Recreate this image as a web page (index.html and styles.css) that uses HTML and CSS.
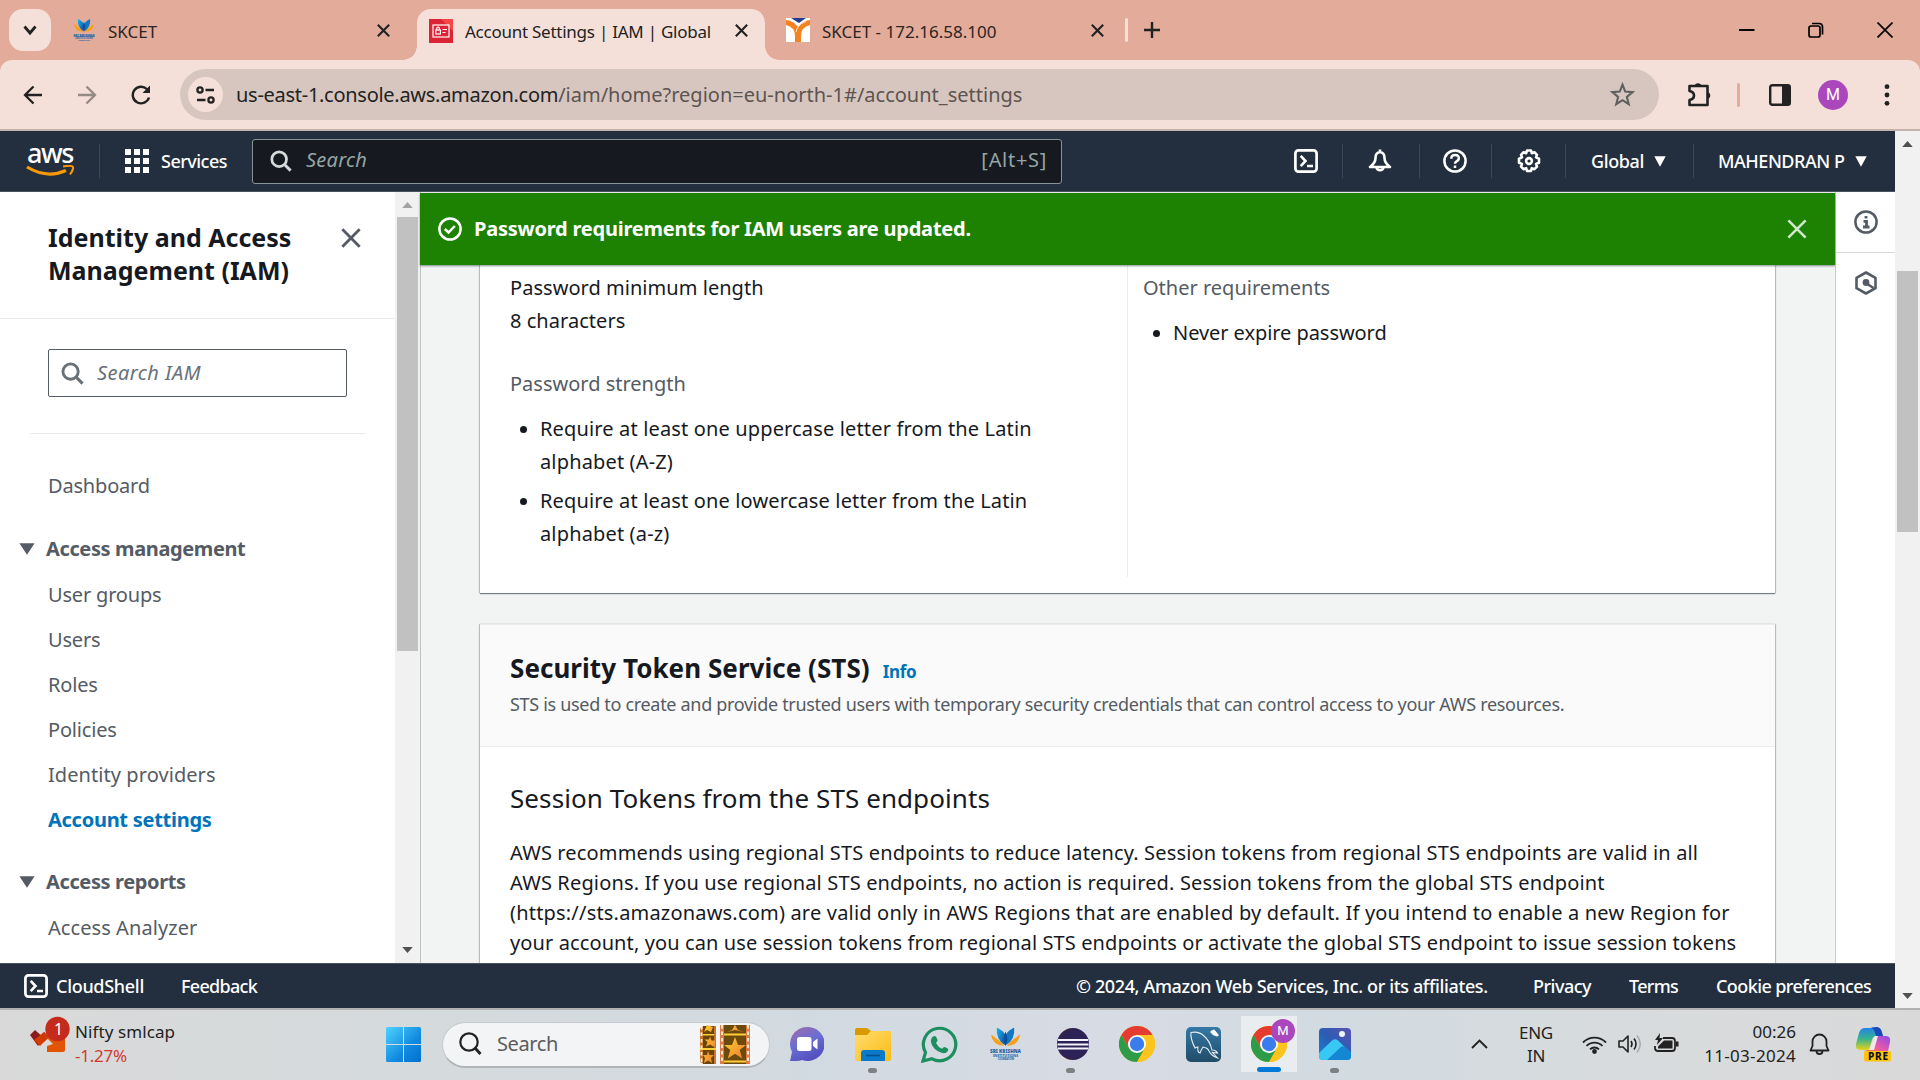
FILE: index.html
```html
<!DOCTYPE html>
<html lang="en">
<head>
<meta charset="utf-8">
<title>Account Settings | IAM | Global</title>
<link rel="stylesheet" href="styles.css">
</head>
<body>
<svg width="0" height="0" class="defs">
  <defs>
    <linearGradient id="gold" x1="0" y1="0" x2="1" y2="1"><stop offset="0" stop-color="#fbd02e"/><stop offset="1" stop-color="#ef7d33"/></linearGradient>
    <linearGradient id="win" x1="0" y1="0" x2="1" y2="1"><stop offset="0" stop-color="#4fd3ff"/><stop offset=".6" stop-color="#128ae0"/><stop offset="1" stop-color="#0070d0"/></linearGradient>
    <linearGradient id="lotusBlue" x1="0" y1="0" x2="1" y2="1"><stop offset="0" stop-color="#18b4f0"/><stop offset="1" stop-color="#0b4fa0"/></linearGradient>
    <symbol id="x" viewBox="0 0 24 24"><path d="M4 4l16 16M20 4L4 20" fill="none" stroke="currentColor" stroke-width="var(--sw,3)"/></symbol>
    <symbol id="lens" viewBox="0 0 24 24"><circle cx="10" cy="10" r="8" fill="none" stroke="currentColor" stroke-width="3"/><path d="M15.8 15.8l6.7 6.7" stroke="currentColor" stroke-width="3.2"/></symbol>
    <symbol id="shell" viewBox="0 0 24 24"><rect x="1.4" y="1.4" width="21.2" height="21.2" rx="3" fill="none" stroke="currentColor" stroke-width="2.7"/><path d="M6.7 6.8l4.8 5.2-4.8 5.2M13 17h6" fill="none" stroke="currentColor" stroke-width="2.6"/></symbol>
    <symbol id="caret" viewBox="0 0 12 10" preserveAspectRatio="none"><path d="M.3.2h11.400L6 9.800z" fill="currentColor"/></symbol>
    <symbol id="lotus" viewBox="0 0 32 34">
      <path d="M14.500 19Q2.500 18.500 1 7q3 2.500 6 4.500 5 3 7.500 7.500zM17.500 19Q29.500 18.500 31 7q-3 2.500-6 4.500-5 3-7.500 7.500z" fill="#f9a01b"/>
      <path d="M15 18Q6 12 7 0q3 1.500 5 3 4 3 4 7z" fill="url(#lotusBlue)"/>
      <path d="M17 18q9-6 8-18-3 1.500-5 3-4 3-4 7z" fill="#1278c4"/>
      <path d="M16 19Q12 12 16 4q4 8 0 15z" fill="#0d4f9e"/>
      <text x="0" y="26" textLength="32" lengthAdjust="spacingAndGlyphs" class="lt">SRI KRISHNA</text>
      <text x="3" y="30" textLength="26" lengthAdjust="spacingAndGlyphs" class="ls">INSTITUTIONS</text>
      <text x="8" y="33" textLength="17" lengthAdjust="spacingAndGlyphs" class="lx">COIMBATORE</text>
    </symbol>
    <symbol id="chrome" viewBox="0 0 36 36">
      <circle cx="18" cy="18" r="18" fill="#fbbc05"/>
      <path d="M2.4 9A18 18 0 0 1 33.6 9H18l-7.8 13.5z" fill="#e53b30"/>
      <path d="M2.4 9A18 18 0 0 0 18 36l7.8-13.5h-15.6z" fill="#2d9c48"/>
      <path d="M18 36A18 18 0 0 0 33.6 9H18l7.8 13.5z" fill="#fcc41c"/>
      <circle cx="18" cy="18" r="9" fill="#fff"/><circle cx="18" cy="18" r="7.2" fill="#3a7cee"/>
    </symbol>
  </defs>
</svg>

<header class="tabs">
  <button class="tab-menu"><svg width="14" height="12" viewBox="0 0 14 12"><path d="M1.5 2.5L7 9l5.500-6.500" fill="none" stroke="#222" stroke-width="2.800"/></svg></button>
  <div class="tab first"><svg class="fav" viewBox="0 0 32 34"><use href="#lotus"/></svg><span class="t">SKCET</span><svg class="close"><use href="#x"/></svg></div>
  <div class="tab active">
    <svg class="fav" viewBox="0 0 24 24"><rect width="24" height="24" fill="#dd2436"/><path d="M12 0h12v12z" fill="#f54749"/><g fill="none" stroke="#fff" stroke-width="1.200"><rect x="4" y="6" width="16" height="12"/><rect x="6.800" y="11" width="4.600" height="4"/><path d="M7.800 11V9q1.300-2 2.600 0v2M13.500 10.500h4.500M13.500 13.500h3"/></g></svg>
    <span class="t act">Account Settings | IAM | Global</span><svg class="close"><use href="#x"/></svg>
  </div>
  <div class="tab third">
    <svg class="fav" viewBox="0 0 24 24"><rect width="24" height="24" fill="#fff"/><path d="M5 0h15l-7 5z" fill="#253c91"/><path d="M0 2Q8 3 12 9q4-6 12-7v5q-9 2-9 11v6H9v-6Q9 9 0 7z" fill="#f58220"/><path d="M12 9q-1.500 2-2 5M12 9q3-4 8-5.500" fill="none" stroke="#fff" stroke-width=".8"/></svg>
    <span class="t">SKCET - 172.16.58.100</span><svg class="close"><use href="#x"/></svg>
  </div>
  <i class="tab-sep"></i>
  <svg class="plus" viewBox="0 0 16 16"><path d="M8 0v16M0 8h16" stroke="#222" stroke-width="2.400"/></svg>
  <div class="win">
    <svg width="16" height="16" viewBox="0 0 16 16"><path d="M0 8h15.500" stroke="#000" stroke-width="2"/></svg>
    <svg width="16" height="16" viewBox="0 0 16 16" fill="none" stroke="#000" stroke-width="1.700"><rect x="1" y="4" width="11" height="11" rx="2"/><path d="M4 1.500h7q3.500 0 3.500 3.500v7.500"/></svg>
    <svg width="16" height="16" viewBox="0 0 16 16"><path d="M.5.5l15 15M15.500.5l-15 15" stroke="#000" stroke-width="1.700"/></svg>
  </div>
</header>

<div class="toolbar-bg">
<div class="toolbar">
  <svg class="nav-i" viewBox="0 0 20 20" fill="none" stroke="#222" stroke-width="2.300"><path d="M19 10H3M10.500 1.500L2 10l8.500 8.500"/></svg>
  <svg class="nav-i dim" viewBox="0 0 20 20" fill="none" stroke="#222" stroke-width="2.300"><path d="M1 10h16M9.500 1.500L18 10l-8.500 8.500"/></svg>
  <svg class="nav-i" viewBox="0 0 20 20" fill="none" stroke="#222" stroke-width="2.400"><path d="M18 12.500A8.300 8.300 0 1 1 15.800 4L18 6.300"/><path d="M19 .5V8h-7.500z" fill="#222" stroke="none"/></svg>
  <div class="omni">
    <span class="site"><svg width="20" height="18" viewBox="0 0 20 18" fill="none" stroke="#222" stroke-width="2.300"><circle cx="4" cy="4" r="2.600"/><path d="M9.500 4H18M1 14h8.500"/><circle cx="15" cy="14" r="2.600"/></svg></span>
    <span class="url"><b>us-east-1.console.aws.amazon.com</b><span>/iam/home?region=eu-north-1#/account_settings</span></span>
    <svg class="star" viewBox="0 0 24 24"><path d="M12 2.500l2.600 6.700 7.100.5-5.500 4.600 1.800 7L12 17.500l-6 3.800 1.800-7L2.300 9.700l7.100-.5z" fill="none" stroke="#5f5f5f" stroke-width="2"/></svg>
  </div>
  <svg class="puzzle" viewBox="0 0 25 26"><path d="M2.500 5h18v19h-18v-5q4.500-1 4.500-4.500T2.500 10z" fill="none" stroke="#222" stroke-width="2.600" stroke-linejoin="round"/><path d="M7.500 5a3.600 3.600 0 0 1 7 0zM20.500 11a3.600 3.600 0 0 1 0 7z" fill="#222"/></svg>
  <i class="tb-sep"></i>
  <svg class="panel" viewBox="0 0 22 22"><rect x="1.200" y="1.200" width="19.600" height="19.600" rx="2" fill="none" stroke="#222" stroke-width="2.400"/><path d="M13 1h8v20h-8z" fill="#222"/></svg>
  <span class="avatar">M</span>
  <svg class="dots" viewBox="0 0 6 22"><circle cx="3" cy="2.700" r="2.400"/><circle cx="3" cy="11" r="2.400"/><circle cx="3" cy="19.300" r="2.400"/></svg>
</div>
</div>

<div class="page">
<div class="console">
  <nav class="aws">
    <div class="logo"><span>aws</span><svg width="50" height="13" viewBox="0 0 50 13"><path d="M1 2q20 12 39 3.500" fill="none" stroke="#f90" stroke-width="3.200"/><path d="M37 1.500q9-1.500 10 .5.500 3-3 7.500" fill="none" stroke="#f90" stroke-width="2"/></svg></div>
    <i class="sep s0"></i>
    <svg class="grid9" viewBox="0 0 24 24" fill="#fff"><path d="M0 0h6v6H0zM9 0h6v6H9zM18 0h6v6h-6zM0 9h6v6H0zM9 9h6v6H9zM18 9h6v6h-6zM0 18h6v6H0zM9 18h6v6H9zM18 18h6v6h-6z"/></svg>
    <span class="services">Services</span>
    <div class="aws-search"><svg><use href="#lens"/></svg><em>Search</em><span>[Alt+S]</span></div>
    <div class="aws-right">
      <span class="cell c1"><svg class="ic"><use href="#shell"/></svg></span>
      <span class="cell c2"><svg class="ic" viewBox="0 0 24 24" fill="none" stroke="#fff" stroke-width="2.600" stroke-linejoin="round"><path d="M12 .5v3M12 3q-4.500.5-4.500 6 0 5-5.500 9h20q-5.500-4-5.500-9 0-5.500-4.500-6zM8.500 18.500a3.600 3.600 0 0 0 7 0"/></svg></span>
      <span class="cell c3"><svg class="ic" viewBox="0 0 24 24" fill="none" stroke="#fff" stroke-width="2.500"><circle cx="12" cy="12" r="10.600"/><path d="M8.300 9.700q0-3.700 3.800-3.700t3.700 3.300q0 2-2.300 3-1.500.8-1.500 2.500M12 16.500v2.600"/></svg></span>
      <span class="cell c4"><svg class="ic" viewBox="0 0 24 24" fill="none" stroke="#fff" stroke-width="2.600" stroke-linejoin="round"><path d="M10 1.500h4l.8 2.700 2.600-1 2.600 2.600-1 2.600 3 1.300v4l-3 1.200 1 2.700-2.600 2.600-2.600-1-.8 2.800h-4l-.8-2.800-2.600 1L4 17.600l1-2.700-3-1.200v-4l3-1.300-1-2.600 2.600-2.600 2.600 1z"/><circle cx="12" cy="12" r="2.900"/></svg></span>
      <span class="cell c5"><span class="glob">Global</span><svg class="car"><use href="#caret"/></svg></span>
      <span class="cell c6"><span class="mah">MAHENDRAN P</span><svg class="car"><use href="#caret"/></svg></span>
    </div>
  </nav>

  <div class="mid">
    <aside class="side">
      <div class="side-head"><h2><span>Identity and Access</span><br>Management (IAM)</h2><svg><use href="#x"/></svg></div>
      <div class="side-search"><svg><use href="#lens"/></svg><em>Search IAM</em></div>
      <ul>
        <li class="dash">Dashboard</li>
        <li class="grp"><svg><use href="#caret"/></svg>Access management</li>
        <li>User groups</li><li>Users</li><li>Roles</li><li>Policies</li><li class="idp">Identity providers</li>
        <li class="cur">Account settings</li>
        <li class="grp g2"><svg><use href="#caret"/></svg>Access reports</li>
        <li class="idp">Access Analyzer</li>
      </ul>
    </aside>
    <div class="bar1"><svg class="up"><use href="#caret"/></svg><i></i><svg><use href="#caret"/></svg></div>
    <main>
      <div class="flash"><svg class="ic" viewBox="0 0 24 24" fill="none" stroke="#fff" stroke-width="2.500"><circle cx="12" cy="12" r="10.600"/><path d="M6.800 12l3.700 3.500 6.300-6.500"/></svg><b>Password requirements for IAM users are updated.</b><svg class="fx"><use href="#x"/></svg></div>
      <section class="card policy">
        <div class="col">
          <p>Password minimum length</p><p>8 characters</p>
          <p class="lab str">Password strength</p>
          <ul><li>Require at least one uppercase letter from the Latin<br>alphabet (A-Z)</li><li>Require at least one lowercase letter from the Latin<br>alphabet (a-z)</li></ul>
        </div>
        <div class="col two"><p class="lab">Other requirements</p><ul><li>Never expire password</li></ul></div>
      </section>
      <section class="card sts">
        <div class="sts-head"><h2>Security Token Service (STS)<a>Info</a></h2><p>STS is used to create and provide trusted users with temporary security credentials that can control access to your AWS resources.</p></div>
        <h3>Session Tokens from the STS endpoints</h3>
        <p class="para">AWS recommends using regional STS endpoints to reduce latency. Session tokens from regional STS endpoints are valid in all<br>AWS Regions. If you use regional STS endpoints, no action is required. Session tokens from the global STS endpoint<br><span>(https://sts.amazonaws.com) are valid only in AWS Regions that are enabled by default. If you intend to enable a new Region for</span><br><span class="l4">your account, you can use session tokens from regional STS endpoints or activate the global STS endpoint to issue session tokens</span></p>
      </section>
    </main>
    <aside class="rail">
      <span><svg class="ic" viewBox="0 0 24 24" fill="none" stroke="#545b64" stroke-width="2.500"><circle cx="12" cy="12" r="10.600"/><path d="M12 6v2.600M9.500 11.300h3v5M9 17h6.500" stroke-width="2.800"/></svg></span>
      <span><svg class="ic" viewBox="0 0 24 24" fill="none" stroke="#545b64" stroke-width="2.600"><path d="M12 1.500l9.500 5.300v10.400L12 22.500l-9.500-5.300V6.800z" stroke-linejoin="round"/><circle cx="12" cy="11.500" r="3.400" fill="#545b64" stroke="none"/><path d="M12 12l7.500 5"/></svg></span>
    </aside>
  </div>

  <footer>
    <svg class="ic"><use href="#shell"/></svg><span class="f1">CloudShell</span><span class="f2">Feedback</span>
    <span class="f3">© 2024, Amazon Web Services, Inc. or its affiliates.</span><span class="f4">Privacy</span><span class="f5">Terms</span><span class="f6">Cookie preferences</span>
  </footer>
</div>
<div class="bar2"><svg class="up"><use href="#caret"/></svg><i></i><svg><use href="#caret"/></svg></div>
</div>

<div class="taskbar">
  <div class="widget">
    <svg width="42" height="38" viewBox="0 0 42 38"><path d="M2 19l5-5 9 8-6 8z" fill="#8c1d18"/><path d="M6 24l6 6 9-9-5-5z" fill="#d83b01"/><path d="M16 16l-4 5 4 5 5-5z" fill="#c93a08"/><path d="M19 36v-6l6-2-6-6 8-6h10v18q0 2-2 2z" fill="#e25303"/><circle cx="29.500" cy="13" r="12.200" fill="#c42b1c"/><text x="30.500" y="18.500" text-anchor="middle" class="badge-n">1</text></svg>
    <div><p class="nif">Nifty smlcap</p><p class="neg">-1.27%</p></div>
  </div>
  <div class="app win11"><svg width="35" height="35" viewBox="0 0 35 35" fill="url(#win)"><path d="M0 1.500Q0 0 1.500 0H17v17H0zM18 0h15.500Q35 0 35 1.500V17H18zM0 18h17v17H1.500Q0 35 0 33.500zM18 18h17v15.500q0 1.500-1.500 1.500H18z"/></svg></div>
  <div class="tsearch">
    <svg width="23" height="24" viewBox="0 0 23 24" fill="none" stroke="#222"><circle cx="10" cy="10" r="8.700" stroke-width="2.200"/><path d="M15.500 15.500l6 6.500" stroke-width="2.900"/></svg><span>Search</span>
    <svg class="film" width="50" height="39" viewBox="0 0 50 39"><path d="M0 3l4-2h12v38H4l-4-2z" fill="#c9772f"/><path d="M3 1h11v38H3z" fill="#6b4507"/><path d="M20 0h30v39H20z" fill="#e07b45"/><path d="M24 0h22v39H24z" fill="#6b4a0c"/><path d="M24 8.500h22v2H24zM24 35.500h22v2H24zM0 23h16v2H0zM3 9h11v1.500H3z" fill="#ffcf3a"/><path d="M22 0v39M48 0v39M1.500 1v37" stroke="#fff5e0" stroke-width="1.800" stroke-dasharray="3.500 3"/><path d="M35 12l3 8h8l-6.300 5 2.500 8.500L35 28.700l-7.200 4.800 2.500-8.500-6.300-5h8z" fill="url(#gold)"/><path d="M27 7l5-2 3-5 3 5 6 2-9-2z" fill="url(#gold)"/><path d="M10 11.500l1.500 4H15v4l-1 2.500-4-2.500-4 2 1.500-4.500-3-2.500H9zM8 26l1.500 4h4.500l-3 3 1 5-4-2.500L4 38l1-5-2-3h4zM7 0l6 2-2 5-4-2-3 2z" fill="url(#gold)"/></svg>
  </div>
  <div class="app"><svg width="34" height="34" viewBox="0 0 34 34"><defs><linearGradient id="ch" x1="0" y1="0" x2=".5" y2="1"><stop offset="0" stop-color="#a46aa8"/><stop offset=".5" stop-color="#6c6fd2"/><stop offset="1" stop-color="#5450c0"/></linearGradient></defs><path d="M17 0a17 17 0 1 1-5 33q-5 1.500-12 1l2-9A17 17 0 0 1 17 0z" fill="url(#ch)"/><rect x="7" y="10" width="14.500" height="14" rx="2.500" fill="#fff"/><path d="M23 15l4.500-3.500v11L23 19z" fill="#fff"/></svg></div>
  <div class="app run"><svg width="36" height="33" viewBox="0 0 36 33"><path d="M0 2q0-2 2-2h10l4 3v5H0z" fill="#d99a00"/><path d="M0 7h12l4-4h19q1 0 1 1v27q0 2-2 2H2q-2 0-2-2z" fill="url(#fold)"/><defs><linearGradient id="fold" x1="0" y1="0" x2="1" y2="1"><stop offset="0" stop-color="#ffdc70"/><stop offset="1" stop-color="#fcbb12"/></linearGradient></defs><path d="M6 33v-8q0-3 3-3h18q3 0 3 3v8z" fill="#0b79c9"/><path d="M11 27.500h14" stroke="#064f8c" stroke-width="1.600"/></svg></div>
  <div class="app"><svg width="37" height="37" viewBox="0 0 37 37"><path d="M2 35l2.500-8.500A16.200 16.200 0 1 1 11 32.800z" fill="none" stroke="#1d8f5f" stroke-width="3.200"/><path d="M12 10.500q2.500-1.500 3.500 1l1 2.500q.4 1.200-1.500 3 2 4.200 6 5.800 1.500-2 2.700-1.800l3 1.500q1 .6.200 2.500-2.400 3.500-7 1.600Q12 23.500 10.200 17q-1-4 1.800-6.500z" fill="#1d8f5f"/></svg></div>
  <div class="app"><svg width="31" height="34" viewBox="0 0 32 34"><use href="#lotus"/></svg></div>
  <div class="app run"><svg width="36" height="34" viewBox="0 0 36 34"><path d="M17 1A16.500 16.500 0 0 0 17 33 20 20 0 0 1 17 1z" fill="#f7941e"/><circle cx="20" cy="17" r="16" fill="#2c2255"/><path d="M5 13h30M4.500 17.500h31M5 21.500h30" stroke="#f4f2fa" stroke-width="1.900"/></svg></div>
  <div class="app"><svg width="36" height="36"><use href="#chrome"/></svg></div>
  <div class="app"><svg width="35" height="35" viewBox="0 0 35 35"><defs><linearGradient id="my" x1="0" y1="0" x2="0" y2="1"><stop offset="0" stop-color="#3578a5"/><stop offset="1" stop-color="#214c68"/></linearGradient></defs><rect width="35" height="35" rx="5" fill="url(#my)"/><path d="M9 21Q4 11 5 5.500 13 4 18 9q6 5 8 14 4 0 5.500 3l-5-.5 5 5.500q-6-2-8.500-7-1-3-6-4-2 3-3 6-3-1-2-6-2 0-3 1z" fill="none" stroke="#e4eef4" stroke-width="1.100"/><path d="M25 4l3 3 3 1M27 3l5 6" stroke="#fff" stroke-width="2.600"/></svg></div>
  <div class="app on"><svg width="36" height="36"><use href="#chrome"/></svg><span class="mini">M</span></div>
  <div class="app run"><svg width="32" height="32" viewBox="0 0 32 32"><defs><linearGradient id="ph" x1="0" y1="1" x2="1" y2="0"><stop offset="0" stop-color="#1384d8"/><stop offset=".5" stop-color="#2c5cb4"/><stop offset="1" stop-color="#5c54b0"/></linearGradient></defs><rect width="32" height="32" rx="4" fill="url(#ph)"/><path d="M0 25l13-12.500q3-2.500 6 0L32 25v3q0 4-4 4H4q-4 0-4-4z" fill="#37c8f4"/><path d="M8 32l14-13q2-1.500 4 0l6 5.500V28q0 4-4 4z" fill="#1487d4"/><circle cx="23" cy="6" r="3" fill="#eef6ff"/></svg></div>
  <div class="tray">
    <svg class="chev" width="17" height="10" viewBox="0 0 17 10"><path d="M1 9l7.500-7.500L16 9" fill="none" stroke="#222" stroke-width="1.900"/></svg>
    <div class="lang"><p>ENG</p><p>IN</p></div>
    <svg class="wifi" width="25" height="19" viewBox="0 0 25 19" fill="none" stroke="#222" stroke-width="1.800"><path d="M1 7.500a16 16 0 0 1 23 0M4.500 11a11 11 0 0 1 16 0M8 14.300a6.500 6.500 0 0 1 9 0"/><circle cx="12.500" cy="16.500" r="1.500" fill="#222"/></svg>
    <svg class="vol" width="25" height="20" viewBox="0 0 25 20" fill="none" stroke="#222" stroke-width="1.600"><path d="M1 7h4l5-5v16l-5-5H1z" stroke-linejoin="round"/><path d="M13 7q2 3 0 6M16 4.500q4 5.500 0 11"/><path d="M19 1.500q6.500 8.500 0 17" stroke="#aaa"/></svg>
    <svg class="bat" width="25" height="20" viewBox="0 0 25 20"><path d="M9 5h9q3 0 3 3v7q0 3-3 3H4q-3 0-3-3v-2" fill="none" stroke="#222" stroke-width="1.800"/><path d="M4 15.500V13.500l6-6h8.500v8z" fill="#222"/><path d="M22 8.500h2.500v5H22z" fill="#222"/><path d="M6 0L1 7h3l-1 5 6-7H5.500z" fill="#222"/></svg>
    <div class="clock"><p>00:26</p><p class="date">11-03-2024</p></div>
    <svg class="bell" width="21" height="23" viewBox="0 0 21 23" fill="none" stroke="#222" stroke-width="1.800"><path d="M1.500 17.500L3.500 13V8.500a7 7 0 0 1 14 0V13l2 4.500zM7.500 18a3 3 0 0 0 6 0" stroke-linejoin="round"/></svg>
    <svg class="cop" width="36" height="35" viewBox="0 0 36 35"><defs><linearGradient id="c1" x1="0" y1="0" x2="0" y2="1"><stop offset="0" stop-color="#2283e8"/><stop offset=".5" stop-color="#39b58a"/><stop offset="1" stop-color="#e8d21e"/></linearGradient><linearGradient id="c2" x1="1" y1="0" x2="0" y2="1"><stop offset="0" stop-color="#8a4be8"/><stop offset=".6" stop-color="#e85aa8"/><stop offset="1" stop-color="#f8823c"/></linearGradient></defs><path d="M9 1h13q3 0 4 8h-6q-3 0-4 4l-3 10H4q-5 0-4-6L3 6q1.500-5 6-5z" fill="url(#c1)"/><path d="M21 0q4 0 5.500 7l1 3h-7L18 3q-1-2-3-2.500z" fill="#1849b8"/><path d="M21 9h9q5 0 4 6l-2 9H13q-3 0-5-1h5q2 0 3-3z" fill="url(#c2)"/><path d="M19 9h3l-4 14h-5z" fill="#f1e9e6"/><rect x="8" y="24" width="27" height="10.500" rx="2" fill="#fcc40f"/><text x="12" y="32.700" textLength="20" class="pre">PRE</text></svg>
  </div>
</div>
</body>
</html>
```
FILE: styles.css
```css
* { box-sizing: border-box; margin: 0; padding: 0; }
body { width: 1920px; height: 1080px; overflow: hidden; font: 20px/33px "Noto Sans", sans-serif; color: #16191f; display: flex; flex-direction: column; }
ul { list-style: none; }
svg { display: block; flex: none; }
.defs { position: absolute; }
i { flex: none; }
span, em, b, p { white-space: nowrap; }

/* tab strip */
.tabs { height: 60px; flex: none; background: #e3ab9a; display: flex; align-items: center; padding-left: 9px; }
.tab-menu { width: 42px; height: 42px; border: 0; border-radius: 14px; background: #f5e0d9; display: grid; place-items: center; }
.tab { display: flex; align-items: center; font-size: 17px; color: #2b2422; }
.tab .fav { width: 24px; height: 24px; }
.tab .t { flex: 1; margin-left: 12px; padding-top: 2px; }
.tab .close { width: 17px; height: 17px; color: #222; }
.first { width: 319px; margin-left: 22px; }
.first .fav { width: 22px; height: 23px; }
.tab.first .t { margin-left: 13px; }
.active { width: 348px; height: 51px; align-self: flex-end; margin-left: 25px; padding: 0 15px 8px 12px; background: #f5e0d9; border-radius: 14px 14px 0 0; position: relative; }
.active::before, .active::after { content: ""; position: absolute; bottom: 0; width: 14px; height: 14px; }
.active::before { left: -14px; background: radial-gradient(circle at 0 0, transparent 13.5px, #f5e0d9 14px); }
.active::after { right: -14px; background: radial-gradient(circle at 100% 0, transparent 13.5px, #f5e0d9 14px); }
.act { letter-spacing: -.25px; color: #222; }
.third { width: 320px; margin-left: 21px; }
.tab-sep { width: 3px; height: 24px; border-radius: 2px; background: #f5e0d9; margin-left: 19px; }
.plus { width: 16px; height: 16px; margin-left: 16px; }
.win { margin-left: auto; display: flex; gap: 53px; padding-right: 27px; }

/* toolbar */
.toolbar-bg { background: #e3ab9a; flex: none; }
.toolbar { height: 71px; background: #f5e0d9; border-radius: 12px 12px 0 0; border-bottom: 2px solid #c4b2ab; display: flex; align-items: center; padding-left: 23px; }
.nav-i { width: 20px; height: 20px; margin-right: 34px; }
.dim { opacity: .45; }
.omni { width: 1479px; height: 51px; margin-left: -5px; background: #d7c6bf; border-radius: 26px; display: flex; align-items: center; padding: 0 24px 0 8px; }
.site { width: 35px; height: 35px; border-radius: 50%; background: #f5e0d9; display: grid; place-items: center; }
.url { flex: 1; margin-left: 13px; color: #5d5451; }
.url b { font-weight: 400; color: #222; letter-spacing: -.28px; }
.star { width: 25px; height: 25px; }
.puzzle { width: 25px; height: 26px; margin-left: 28px; margin-top: -2px; }
.tb-sep { width: 3px; height: 24px; background: #e3ab9a; border-radius: 2px; margin-left: 25px; }
.panel { width: 22px; height: 22px; margin-left: 29px; }
.avatar { width: 30px; height: 30px; margin-left: 27px; border-radius: 50%; background: #ab47bc; color: #fff; font: 16px/30px Roboto, sans-serif; text-align: center; }
.dots { width: 6px; height: 22px; margin-left: 36px; fill: #222; }

/* console frame */
.page { flex: none; height: 879px; display: flex; border-bottom: 2px solid #b1b1b1; }
.console { width: 1895px; display: flex; flex-direction: column; }
.ic { width: 24px; height: 24px; }
.aws { height: 61px; flex: none; background: #232f3e; border-bottom: 1px solid #4a545f; display: flex; align-items: center; color: #fff; font-size: 18px; line-height: 30px; font-weight: 500; padding-left: 26px; }
.logo { width: 50px; display: flex; flex-direction: column; padding-left: 1px; margin-top: -8px; }
.logo span { font-size: 27px; line-height: 34px; letter-spacing: -1.500px; }
.logo svg { margin: -5px 0 0 -1px; }
.sep { width: 1px; height: 34px; background: #3d4855; }
.s0 { margin-left: 23px; }
.grid9 { width: 24px; height: 24px; margin-left: 25px; }
.services { margin: -1px 0 0 12px; letter-spacing: -.52px; width: 91px; }
.aws-search { width: 810px; height: 45px; border: 1px solid #879596; border-radius: 3px; background: #16191f; display: flex; align-items: center; padding: 0 14px 0 17px; font-size: 20px; font-weight: 400; color: #95a5a6; }
.aws-search svg { width: 22px; height: 22px; color: #d5dbdb; }
.aws-search em { flex: 1; margin: -2px 0 0 14px; letter-spacing: .23px; }
.aws-search span { letter-spacing: .7px; margin-top: -2px; }
.aws-right { margin-left: 210px; display: flex; }
.cell { height: 34px; display: flex; align-items: center; border-left: 1px solid #3d4855; }
.c1 { width: 70px; padding-left: 21px; border-color: transparent; }
.c2 { width: 77px; padding-left: 25px; }
.c3 { width: 72px; padding-left: 23px; }
.c4 { width: 74px; padding-left: 25px; }
.c5 { width: 128px; padding-left: 25px; }
.c6 { padding-left: 24px; }
.glob { width: 63px; letter-spacing: -.38px; margin-top: -1px; }
.mah { width: 137px; letter-spacing: -.48px; margin-top: -1px; }
.car { width: 12px; height: 11px; }
.mid { height: 771px; display: flex; overflow: hidden; background: #f2f3f3; }

/* side navigation */
.side { width: 395px; background: #fff; color: #545b64; }
.side-head { height: 127px; border-bottom: 1px solid #eaeded; padding: 29px 31px 0 48px; display: flex; justify-content: space-between; }
.side-head h2 { font-size: 25px; line-height: 33px; color: #16191f; }
.side-head svg { width: 26px; height: 26px; margin-top: 4px; --sw: 2.6; }
.side-search { width: 299px; height: 48px; margin: 30px 0 36px 48px; border: 1px solid #545b64; border-radius: 2px; display: flex; align-items: center; padding-left: 12px; color: #687078; }
.side-search svg { width: 23px; height: 23px; }
.side-search em { margin: -2px 0 0 13px; letter-spacing: .46px; }
.side ul { margin-left: 30px; width: 335px; border-top: 1px solid #eaeded; padding: 29px 0 0 18px; }
.side li { height: 45px; line-height: 45px; white-space: nowrap; letter-spacing: -.18px; }
.side .idp { letter-spacing: .07px; }
.side .cur { font-weight: 700; color: #0073bb; letter-spacing: -.27px; }
.side .grp { font-weight: 700; letter-spacing: -.38px; margin: 18px 0 1px -29px; display: flex; align-items: center; }
.side .grp svg { width: 16px; height: 12px; margin-right: 11px; }
.side .g2 { margin-top: 17px; }

/* scrollbars */
.bar1, .bar2 { background: #f1f1f1; display: flex; flex-direction: column; align-items: center; color: #505050; }
.bar1 svg, .bar2 svg { width: 11px; height: 6px; }
.up { transform: rotate(180deg); }
.bar1 { width: 26px; border-right: 1px solid #bcc3c6; padding: 10px 0 10px; justify-content: space-between; }
.bar1 .up { color: #a3a3a3; }
.bar1 i { width: 21px; height: 434px; background: #c1c1c1; margin: 9px 0 auto; }
.bar2 { width: 25px; padding: 10px 0 9px; }
.bar2 i { width: 21px; height: 261px; background: #c1c1c1; margin: 124px 0 auto; }

/* main column */
main { width: 1415px; margin-left: -1px; padding-top: 1px; }
.flash { height: 72px; background: #1d8102; color: #fff; display: flex; align-items: center; padding: 0 25px 0 18px; position: relative; box-shadow: 0 1px 2px rgba(0,28,36,.5); }
.flash b { flex: 1; margin: -2px 0 0 12px; letter-spacing: -.22px; }
.fx { width: 26px; height: 26px; color: #d2e6cd; --sw: 2.4; margin-top: -1px; }
.card { margin: 0 60px; width: 1295px; background: #fff; box-shadow: 0 1px 1px rgba(0,28,36,.5), 1px 0 1px rgba(0,28,36,.18), -1px 0 1px rgba(0,28,36,.18); }
.policy { height: 328px; display: flex; }
.col { width: 647px; padding: 6px 0 0 30px; letter-spacing: .04px; }
.two { height: 312px; border-left: 1px solid #eaeded; padding-left: 15px; }
.lab { color: #545b64; letter-spacing: 0; }
.str { margin-top: 30px; }
.col ul { margin-top: 12px; display: grid; gap: 6px; }
.col li { padding-left: 30px; position: relative; letter-spacing: .15px; }
.two li { letter-spacing: -.06px; }
.col li::before { content: ""; position: absolute; left: 10px; top: 14px; width: 7px; height: 7px; border-radius: 50%; background: currentColor; }
.sts { margin-top: 31px; height: 400px; border-top: 1px solid #eaeded; }
.sts-head { height: 122px; background: #fafafa; border-bottom: 1px solid #eaeded; padding: 25px 30px 0; }
.sts h2 { font-size: 26px; line-height: 36px; letter-spacing: .05px; }
.sts a { font-size: 17px; letter-spacing: -.3px; color: #0073bb; margin-left: 13px; }
.sts-head p { font-size: 18px; color: #545b64; letter-spacing: -.312px; line-height: 26px; margin-top: 1px; }
.sts h3 { font-size: 26px; font-weight: 400; letter-spacing: .08px; line-height: 36px; margin: 33px 30px 0; }
.para { margin: 22px 30px 0; line-height: 30px; letter-spacing: .15px; }
.para span { letter-spacing: .19px; }
.para .l4 { letter-spacing: .11px; }
.rail { flex: 1; background: #fff; border-left: 1px solid #c8cdce; }
.rail span { height: 61px; display: grid; place-items: center; border-bottom: 1px solid #d5dbdb; }
.rail span + span { border: 0; height: 60px; }

/* console footer */
footer { height: 45px; flex: none; margin-top: auto; background: #232f3e; border-top: 1px solid #4a545f; color: #fff; font-size: 18px; font-weight: 500; display: flex; align-items: center; padding-left: 24px; }
.f1 { margin-left: 8px; width: 125px; letter-spacing: -.3px; }
.f2 { letter-spacing: -.71px; width: 895px; }
.f3 { letter-spacing: -.37px; width: 457px; }
.f4 { letter-spacing: -.51px; width: 96px; }
.f5 { letter-spacing: -.72px; width: 87px; }
.f6 { letter-spacing: -.59px; }

/* taskbar */
.taskbar { height: 70px; flex: none; display: flex; align-items: center; background: linear-gradient(90deg, #d9d9d9, #d5dadc 22%, #d2dae1 42%, #d7dbe4 58%, #d2dbe1 70%, #d8dbdd 85%, #d9d9d9); font-size: 17px; line-height: 24px; color: #222; }
.widget { width: 370px; display: flex; padding-left: 28px; align-items: flex-start; height: 58px; }
.widget > div { margin-left: 5px; padding-top: 4px; }
.nif { letter-spacing: .1px; }
.badge-n { font: 16px "Noto Sans", sans-serif; fill: #fff; }
.neg { color: #d13a30; letter-spacing: -.22px; }
.app { width: 66px; height: 56px; display: grid; place-items: center; position: relative; margin-top: -2px; }
.run::after, .on::after { content: ""; position: absolute; bottom: -1px; left: 28px; width: 9px; height: 5px; border-radius: 3px; background: #7d8184; }
.on { background: #e9edf0; background-clip: content-box; padding: 0 5px; }
.on::after { left: 21px; width: 24px; bottom: 0; background: #0078d7; }
.mini { position: absolute; left: 35px; top: 3px; width: 24px; height: 24px; border-radius: 50%; background: #ab47bc; color: #fff; font: 13px/24px Roboto, sans-serif; text-align: center; }
.tsearch { width: 328px; height: 46px; margin: -1px 4px 0 6px; border-radius: 23px; background: #f3f4f6; border: 1px solid #c3c9cc; border-bottom: 2px solid #adb3b6; display: flex; align-items: center; padding: 0 19px 0 16px; font-size: 20px; color: #5c5c5c; }
.tsearch span { flex: 1; margin-left: 15px; letter-spacing: -.4px; }
.tray { display: flex; align-items: center; flex: 1; margin-top: -2px; }
.chev { margin-left: 103px; }
.lang { width: 36px; margin-left: 30px; text-align: center; line-height: 23px; letter-spacing: -.25px; }
.wifi { margin-left: 28px; }
.vol { margin-left: 11px; }
.bat { margin-left: 11px; margin-top: -2px; }
.clock { width: 94px; margin-left: 23px; text-align: right; line-height: 24px; }
.date { letter-spacing: .3px; }
.bell { margin-left: 13px; }
.cop { margin-left: 26px; }
.pre { font: 800 10px "Noto Sans", sans-serif; fill: #111; }
.lt { font: 900 5.500px "Noto Sans", sans-serif; fill: #1763a8; }
.ls { font: 700 4px "Noto Sans", sans-serif; fill: #1763a8; }
.lx { font: 700 3px "Noto Sans", sans-serif; fill: #1763a8; }
```
